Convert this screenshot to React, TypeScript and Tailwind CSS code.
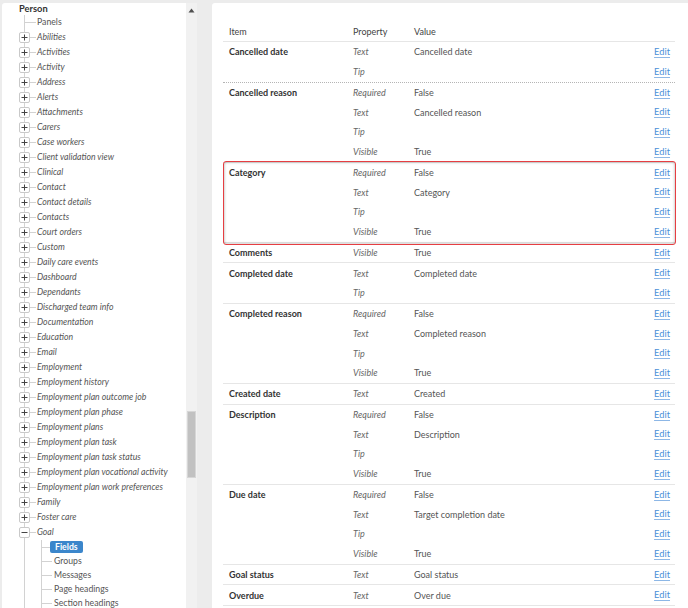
import React from 'react';

const topItems = [
  'Abilities', 'Activities', 'Activity', 'Address', 'Alerts', 'Attachments', 'Carers', 'Case workers',
  'Client validation view', 'Clinical', 'Contact', 'Contact details', 'Contacts', 'Court orders', 'Custom',
  'Daily care events', 'Dashboard', 'Dependants', 'Discharged team info', 'Documentation', 'Education',
  'Email', 'Employment', 'Employment history', 'Employment plan outcome job', 'Employment plan phase',
  'Employment plans', 'Employment plan task', 'Employment plan task status',
  'Employment plan vocational activity', 'Employment plan work preferences', 'Family', 'Foster care',
];

const goalChildren = ['Groups', 'Messages', 'Page headings', 'Section headings'];

type Field = { item: string; props: [string, string][]; dotted?: boolean; highlight?: boolean };

const fields: Field[] = [
  { item: 'Cancelled date', props: [['Text', 'Cancelled date'], ['Tip', '']], dotted: true },
  { item: 'Cancelled reason', props: [['Required', 'False'], ['Text', 'Cancelled reason'], ['Tip', ''], ['Visible', 'True']] },
  { item: 'Category', props: [['Required', 'False'], ['Text', 'Category'], ['Tip', ''], ['Visible', 'True']], highlight: true },
  { item: 'Comments', props: [['Visible', 'True']] },
  { item: 'Completed date', props: [['Text', 'Completed date'], ['Tip', '']] },
  { item: 'Completed reason', props: [['Required', 'False'], ['Text', 'Completed reason'], ['Tip', ''], ['Visible', 'True']] },
  { item: 'Created date', props: [['Text', 'Created']] },
  { item: 'Description', props: [['Required', 'False'], ['Text', 'Description'], ['Tip', ''], ['Visible', 'True']] },
  { item: 'Due date', props: [['Required', 'False'], ['Text', 'Target completion date'], ['Tip', ''], ['Visible', 'True']] },
  { item: 'Goal status', props: [['Text', 'Goal status']] },
  { item: 'Overdue', props: [['Text', 'Over due']] },
];

const ToggleBox = ({ open }: { open?: boolean }) => (
  <span className="-ml-[6px] flex h-[11px] w-[11px] shrink-0 items-center justify-center rounded-[2px] border border-[#c9c9c9] bg-white text-[#444]">
    <svg width="7" height="7" viewBox="0 0 7 7">
      <path d={open ? 'M0.5 3.5h6' : 'M0.5 3.5h6M3.5 0.5v6'} stroke="currentColor" strokeWidth="1" />
    </svg>
  </span>
);

const TreePanel = () => (
  <div className="flex h-full w-[184px] flex-col overflow-hidden rounded-tl-[3px] bg-white pl-[17px] text-[8.7px] leading-none">
    <div className="flex h-[12px] shrink-0 items-center text-[9.3px] font-bold text-[#333]">Person</div>
    <div className="ml-[5px] shrink-0 border-l border-[#d2d2d2]">
      <div className="flex h-[15px] items-center">
        <span className="h-px w-[11px] bg-[#d2d2d2]" />
        <span className="ml-[1px] text-[#555]">Panels</span>
      </div>
      {topItems.map((name) => (
        <div key={name} className="flex h-[15px] items-center">
          <ToggleBox />
          <span className="h-px w-[6px] bg-[#d2d2d2]" />
          <span className="ml-[1px] whitespace-nowrap italic text-[#555]">{name}</span>
        </div>
      ))}
      <div className="flex h-[15px] items-center">
        <ToggleBox open />
        <span className="h-px w-[6px] bg-[#d2d2d2]" />
        <span className="ml-[1px] italic text-[#555]">Goal</span>
      </div>
      <div className="ml-[16px] border-l border-[#d2d2d2]">
        <div className="flex h-[14px] items-center">
          <span className="h-px w-[8px] bg-[#d2d2d2]" />
          <span className="flex h-[12px] items-center rounded-[2px] bg-[#3b86cb] px-[5px] font-bold text-white">Fields</span>
        </div>
        {goalChildren.map((name) => (
          <div key={name} className="flex h-[14px] items-center">
            <span className="h-px w-[10px] bg-[#d2d2d2]" />
            <span className="ml-[2px] whitespace-nowrap text-[#555]">{name}</span>
          </div>
        ))}
        <div className="h-[20px]" />
      </div>
    </div>
  </div>
);

const Scrollbar = () => (
  <div className="flex h-full w-[11px] flex-col items-center bg-[#f1f1f1]">
    <svg width="7" height="5" viewBox="0 0 7 5" className="mt-[5px] shrink-0">
      <path d="M3.5 0.5 L6.5 4.5 L0.5 4.5 Z" fill="#505050" />
    </svg>
    <div className="mt-[398px] h-[67px] w-[9px] shrink-0 border border-[#d6d6d6] bg-[#c1c1c1]" />
  </div>
);

const FieldGroup = ({ f }: { f: Field }) => (
  <div
    className={`relative border-b ${f.dotted ? 'border-dotted border-[#b5b5b5]' : 'border-[#e6e6e6]'}`}
  >
    {f.props.map(([prop, value], i) => (
      <div key={prop} className="flex h-[19.75px] items-center">
        <div className="w-[124px] pl-[6px] font-bold text-[#333]">{i === 0 ? f.item : ''}</div>
        <div className="w-[61px] pl-[6px] italic text-[#666]">{prop}</div>
        <div className="w-[205px] pl-[6px] text-[#555]">{value}</div>
        <div className="w-[62px] pr-[5px] text-right">
          <a className="text-[9.3px] text-[#4a8fd8] underline decoration-[#8db7e6] underline-offset-[2px]">Edit</a>
        </div>
      </div>
    ))}
    {f.highlight && (
      <div className="pointer-events-none absolute -top-[2px] -bottom-[3px] left-0 -right-[1px] rounded-[3px] border border-[#e63e42] shadow-[inset_0_0_3px_rgba(0,0,0,0.35)]" />
    )}
  </div>
);

const FieldsPanel = () => (
  <div className="h-full flex-1 overflow-hidden rounded-tl-[3px] bg-white pl-[11px] pt-[19px] text-[9px] leading-none">
    <div className="w-[452px]">
      <div className="flex h-[20px] items-center border-b border-[#e6e6e6] text-[#444]">
        <div className="w-[124px] pl-[6px]">Item</div>
        <div className="w-[61px] pl-[6px]">Property</div>
        <div className="w-[205px] pl-[6px]">Value</div>
        <div className="w-[62px]" />
      </div>
      {fields.map((f) => (
        <FieldGroup key={f.item} f={f} />
      ))}
    </div>
  </div>
);

export default function App() {
  return (
    <div className="flex h-[608px] w-[688px] overflow-hidden bg-[#ececec] pl-[2px] pt-[3px] font-[Lato,sans-serif]">
      <TreePanel />
      <Scrollbar />
      <div className="w-[15px]" />
      <FieldsPanel />
    </div>
  );
}
